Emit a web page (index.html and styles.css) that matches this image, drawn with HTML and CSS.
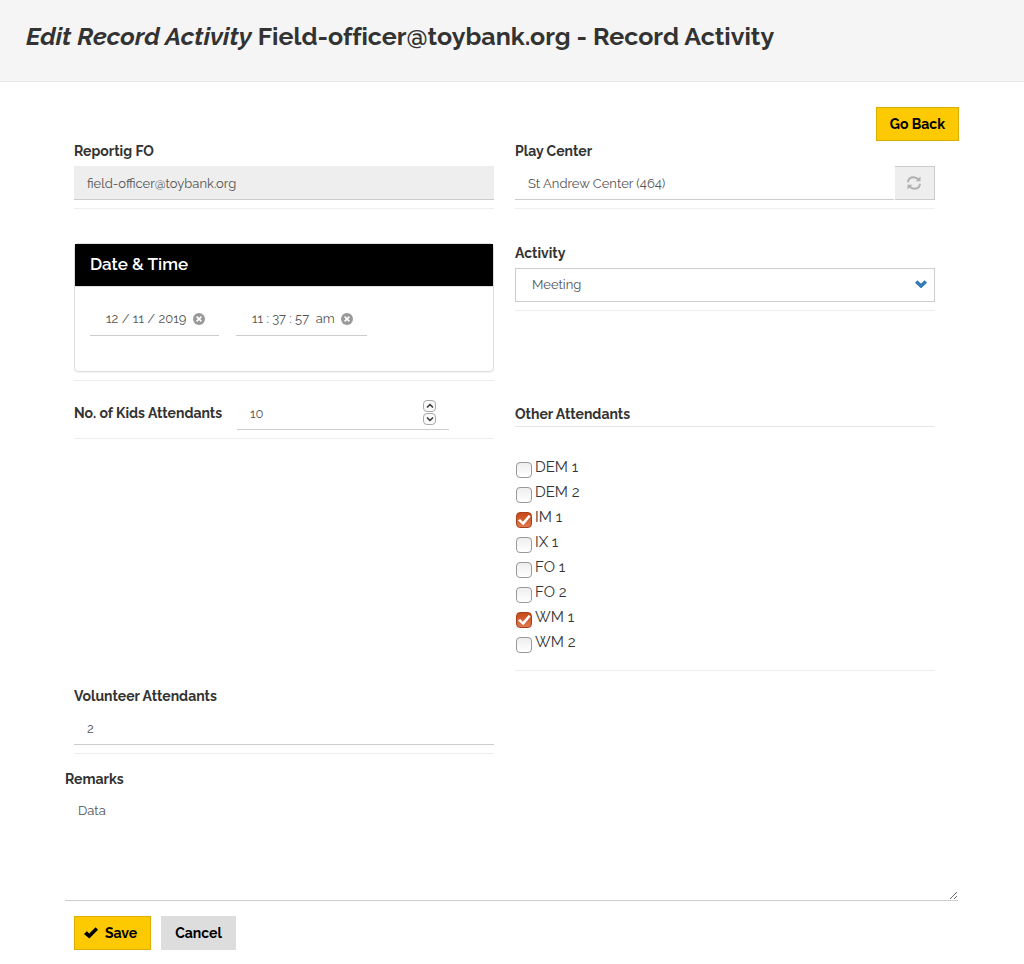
FILE: index.html
```html
<!DOCTYPE html>
<html lang="en">
<head>
<meta charset="utf-8">
<meta name="viewport" content="width=device-width, initial-scale=1">
<title>Edit Record Activity</title>
<link rel="stylesheet" href="styles.css">
</head>
<body>
<header class="page-header">
  <h1 class="page-title"><em>Edit Record Activity</em> Field-officer@toybank.org - Record Activity</h1>
</header>
<main class="page">
  <div class="toolbar"><button type="button" class="btn btn-primary">Go Back</button></div>
  <form>
    <div class="form-grid">
      <div class="field">
        <label class="label" for="officer">Reportig FO</label>
        <input class="control control-readonly" id="officer" type="text" value="field-officer@toybank.org" readonly>
      </div>
      <div class="field">
        <label class="label" for="center">Play Center</label>
        <div class="input-group">
          <input class="control" id="center" type="text" value="St Andrew Center (464)">
          <button type="button" class="refresh" aria-label="Refresh">
            <svg viewBox="0 0 14 14" width="14" height="14" fill="none" stroke="#b0b0b0" stroke-width="2"><path d="M1 6.200C1.200 3.200 3.600 1.300 6.800 1.300C8.800 1.300 10.200 2.100 11.500 3.600M13 7.800C12.800 10.800 10.400 12.700 7.200 12.700C5.200 12.700 3.800 11.900 2.500 10.400"/><path d="M13.500 .5V5.300H8.700ZM.5 13.500V8.700H5.300Z" fill="#b0b0b0" stroke="none"/></svg>
          </button>
        </div>
      </div>

      <div class="field row-spaced">
        <fieldset class="panel">
          <legend class="panel-heading">Date &amp; Time</legend>
          <div class="panel-body">
            <div class="picker">
              <input class="picker-input picker-date" type="text" value="12 / 11 / 2019" aria-label="Date">
              <button type="button" class="clear" aria-label="Clear date"><svg viewBox="0 0 12 12" width="12" height="12"><circle cx="6" cy="6" r="6" fill="#999"/><path d="M3.600 3.600l4.800 4.800M8.400 3.600L3.600 8.400" stroke="#fff" stroke-width="1.600"/></svg></button>
            </div>
            <div class="picker">
              <input class="picker-input picker-time" type="text" value="11 : 37 : 57  am" aria-label="Time">
              <button type="button" class="clear" aria-label="Clear time"><svg viewBox="0 0 12 12" width="12" height="12"><circle cx="6" cy="6" r="6" fill="#999"/><path d="M3.600 3.600l4.800 4.800M8.400 3.600L3.600 8.400" stroke="#fff" stroke-width="1.600"/></svg></button>
            </div>
          </div>
        </fieldset>
      </div>
      <div class="field row-spaced">
        <label class="label" for="activity">Activity</label>
        <div class="select-wrap">
          <select class="control select" id="activity"><option>Meeting</option></select>
          <svg class="select-arrow" viewBox="0 0 12 8" width="12" height="8"><path d="M1.200 1.500L6 6L10.800 1.500" fill="none" stroke="#337ab7" stroke-width="3.500"/></svg>
        </div>
      </div>

      <div class="field row-close inline-field">
        <label class="label label-inline" for="kids">No. of Kids Attendants</label>
        <div class="number">
          <input class="control number-input" id="kids" type="number" value="10">
          <div class="spinner">
            <button type="button" class="spin" aria-label="Increase"><svg viewBox="0 0 8 6" width="8" height="6"><path d="M1 4.500L4 1.500L7 4.500" fill="none" stroke="#333" stroke-width="1.500"/></svg></button>
            <button type="button" class="spin" aria-label="Decrease"><svg viewBox="0 0 8 6" width="8" height="6"><path d="M1 1.500L4 4.500L7 1.500" fill="none" stroke="#333" stroke-width="1.500"/></svg></button>
          </div>
        </div>
      </div>
      <fieldset class="attendants row-close">
        <legend class="attendants-title">Other Attendants</legend>
        <div class="checks">
          <label class="check"><input type="checkbox">DEM 1</label>
          <label class="check"><input type="checkbox">DEM 2</label>
          <label class="check"><input type="checkbox" checked>IM 1</label>
          <label class="check"><input type="checkbox">IX 1</label>
          <label class="check"><input type="checkbox">FO 1</label>
          <label class="check"><input type="checkbox">FO 2</label>
          <label class="check"><input type="checkbox" checked>WM 1</label>
          <label class="check"><input type="checkbox">WM 2</label>
        </div>
      </fieldset>

      <div class="field row-close">
        <label class="label" for="volunteers">Volunteer Attendants</label>
        <input class="control" id="volunteers" type="text" value="2">
      </div>
    </div>

    <div class="remarks">
      <label class="label" for="remarks">Remarks</label>
      <textarea class="control textarea" id="remarks">Data</textarea>
    </div>
    <div class="actions">
      <button type="submit" class="btn btn-primary btn-save"><svg viewBox="0 0 14 12" width="14" height="12"><path d="M0 7L2.800 4.200L5.300 6.500L11.600 .2L14 2.700L5.300 11.500Z"/></svg>Save</button>
      <button type="button" class="btn btn-default">Cancel</button>
    </div>
  </form>
</main>
</body>
</html>
```
FILE: styles.css
```css
* {
  box-sizing: border-box;
}

body {
  margin: 0;
  background: #fff;
  color: #333;
  font: 14px/20px Raleway, Lato, "Open Sans", sans-serif;
}

input,
select,
textarea,
button {
  font: inherit;
}

fieldset {
  min-width: 0;
  margin: 0;
  padding: 0;
  border: 0;
}

legend {
  float: left;
  width: 100%;
  padding: 0;
}

svg {
  display: block;
}

.page-header {
  padding: 20px 26px 28px;
  border-bottom: 1px solid #e7e7e7;
  background: #f5f5f5;
}

.page-title {
  margin: 0;
  font-size: 25px;
  line-height: 33px;
  font-weight: 700;
  font-variant-ligatures: none;
}

.page {
  padding: 25px 65px 14px;
}

.toolbar {
  display: flex;
  justify-content: flex-end;
}

.btn {
  height: 34px;
  padding: 0 13px;
  border: 1px solid #ddd;
  color: #000;
  font-size: 14px;
  font-weight: 700;
}

.btn-primary {
  border-color: #d9ae00;
  background: #fdc900;
}

.btn-default {
  background: #ddd;
}

.btn-save {
  display: flex;
  align-items: center;
  gap: 7px;
  padding: 0 13px 0 9px;
}

.form-grid {
  display: grid;
  grid-template-columns: repeat(2, minmax(0, 1fr));
  column-gap: 21px;
  padding: 0 24px 0 9px;
}

.field {
  align-self: start;
  padding-bottom: 8px;
  border-bottom: 1px solid #eee;
}

.row-spaced {
  margin-top: 34px;
}

.row-close {
  margin-top: 15px;
}

.label {
  display: block;
  margin-bottom: 5px;
  font-size: 14px;
  font-weight: 700;
}

.control {
  display: block;
  width: 100%;
  height: 34px;
  padding: 7px 12px 5px 13px;
  border: 0;
  border-bottom: 1px solid #ccc;
  border-radius: 0;
  background: #fff;
  color: #555;
  font-size: 13px;
  outline: 0;
}

.control-readonly {
  background: #eee;
}

.input-group {
  display: flex;
  gap: 1px;
}

.refresh {
  display: grid;
  place-items: center;
  flex: 0 0 40px;
  height: 34px;
  padding: 0 1px 0 0;
  border: 1px solid #ccc;
  border-left: 0;
  background: #eee;
}

.select-wrap {
  position: relative;
}

.select {
  appearance: none;
  padding: 6px 30px 6px 16px;
  border: 1px solid #ccc;
}

.select-arrow {
  position: absolute;
  top: 12px;
  right: 8px;
  pointer-events: none;
}

.panel {
  border: 1px solid #ddd;
  border-radius: 4px;
  box-shadow: 0 1px 1px rgba(0, 0, 0, 0.05);
}

.panel-heading {
  padding: 9px 15px 11px;
  border-bottom: 1px solid #ddd;
  background: #000;
  color: #fff;
  font-size: 17px;
  line-height: 22px;
  font-weight: 600;
}

.panel-body {
  display: flex;
  clear: both;
  gap: 17px;
  padding: 15px 15px 35px;
}

.picker {
  display: flex;
  align-items: center;
  gap: 3px;
  height: 34px;
  padding: 0 14px 0 16px;
  border-bottom: 1px solid #ccc;
}

.picker-input {
  padding: 0;
  border: 0;
  background: none;
  color: #555;
  font-size: 13px;
  white-space: pre;
}

.picker-date {
  width: 84px;
}

.picker-time {
  width: 86px;
}

.clear {
  padding: 0;
  border: 0;
  background: none;
}

.inline-field {
  display: flex;
  align-items: center;
  gap: 10px;
}

.label-inline {
  flex: 0 0 153px;
  margin: 0;
  white-space: nowrap;
}

.number {
  position: relative;
  flex: 0 1 212px;
}

.number-input {
  appearance: textfield;
}

.spinner {
  position: absolute;
  top: 4px;
  right: 13px;
  display: grid;
  gap: 1px;
}

.spin {
  display: grid;
  place-items: center;
  width: 13px;
  height: 12px;
  padding: 0;
  border: 1px solid #aaa;
  border-radius: 4px;
  background: #fafafa;
}

.attendants {
  padding-bottom: 15px;
  border-bottom: 1px solid #eee;
}

.attendants-title {
  padding: 8px 0 2px;
  border-bottom: 1px solid #e5e5e5;
  font-size: 14px;
  font-weight: 700;
}

.checks {
  display: grid;
  clear: both;
  padding-top: 28px;
}

.check {
  display: flex;
  gap: 3px;
  height: 25px;
  padding-left: 1px;
  color: #333;
  font-size: 15px;
  line-height: 25px;
}

.check input {
  display: grid;
  place-items: center;
  width: 16px;
  height: 16px;
  margin: 7px 0 0;
  appearance: none;
  border: 1px solid #999;
  border-radius: 4px;
  background: linear-gradient(#eee, #fff);
}

.check input:checked {
  border-color: #a8401c;
  background: linear-gradient(#c84818, #e07850);
}

.check input:checked::after {
  content: "";
  width: 14px;
  height: 12px;
  background: #fff;
  clip-path: polygon(7% 55%, 22% 42%, 42% 64%, 83% 8%, 98% 20%, 45% 94%);
}

.remarks {
  margin-top: 15px;
  padding-right: 1px;
}

.textarea {
  height: 107px;
  resize: vertical;
}

.actions {
  display: flex;
  gap: 10px;
  margin-top: 15px;
  padding-left: 9px;
}
```
